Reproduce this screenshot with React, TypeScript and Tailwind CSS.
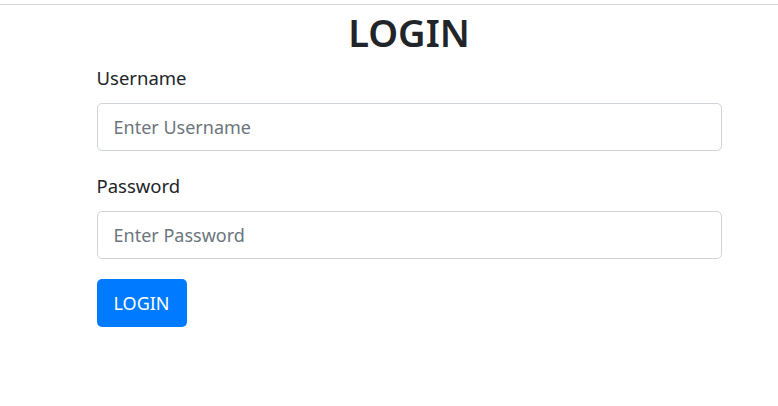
export default function App() {
  return (
    <div className="min-h-screen bg-white pt-1 font-['Noto_Sans',sans-serif] text-[#212529]">
      <div className="border-t border-[#d3d8dc] pl-10">
        <h1 className="mt-[5px] text-center text-[38px] font-semibold leading-[44px]">LOGIN</h1>
        <form className="mx-auto mt-[9px] w-[625px]" onSubmit={(e) => e.preventDefault()}>
          <div className="mb-5">
            <label className="mb-[10px] block text-[18.5px] leading-[30px]">Username</label>
            <input
              type="text"
              placeholder="Enter Username"
              className="block h-[48px] w-full rounded-[5px] border border-[#ced4da] px-4 text-[18px] text-[#495057] placeholder:text-[#6c757d] outline-none"
            />
          </div>
          <div className="mb-5">
            <label className="mb-[10px] block text-[18.5px] leading-[30px]">Password</label>
            <input
              type="password"
              placeholder="Enter Password"
              className="block h-[48px] w-full rounded-[5px] border border-[#ced4da] px-4 text-[18px] text-[#495057] placeholder:text-[#6c757d] outline-none"
            />
          </div>
          <button
            type="submit"
            className="h-[48px] rounded-[5px] bg-[#007bff] px-[17px] text-[18px] text-white"
          >
            LOGIN
          </button>
        </form>
      </div>
    </div>
  )
}
